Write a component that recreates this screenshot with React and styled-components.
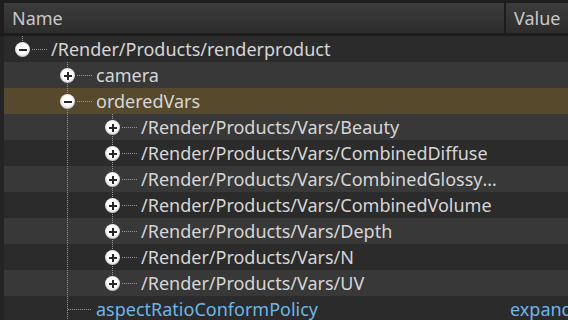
import React from "react";
import styled, { createGlobalStyle, css } from "styled-components";

const Global = createGlobalStyle`
  html, body { margin: 0; padding: 0; background: #1e1e1e; }
  body { width: 568px; height: 320px; overflow: hidden; font-family: "Noto Sans", "Open Sans", sans-serif; }
`;

const Frame = styled.div`
  width: 568px;
  height: 320px;
  overflow: hidden;
  background: #1e1e1e;
  padding-top: 3px;
  box-sizing: border-box;
`;

const Header = styled.div`
  display: flex;
  height: 30px;
  border-bottom: 3px solid #1c1c1c;
  padding-left: 4px;
  background: #1e1e1e;
`;

const HeadCell = styled.div`
  box-sizing: border-box;
  height: 30px;
  line-height: 30px;
  font-size: 18px;
  color: #c9c9c9;
  background: linear-gradient(#3c3c3c, #2c2c2c);
  padding-left: ${(p) => p.$pad}px;
  ${(p) => (p.$w ? css`width: ${p.$w}px; flex: none;` : css`flex: 1;`)}
  ${(p) => p.$sep && css`border-right: 2px solid #1c1c1c;`}
`;

const Body = styled.div`
  display: flex;
  flex-direction: column;
`;

const Row = styled.div`
  display: flex;
  height: 26px;
  border-left: 4px solid #242424;
  background: ${(p) => (p.$hl ? "#574a2c" : p.$alt ? "#383838" : "#2b2b2b")};
`;

const NameCell = styled.div`
  display: flex;
  align-items: stretch;
  width: 504px;
  flex: none;
  min-width: 0;
  padding-right: 8px;
  box-sizing: border-box;
`;

const dotsV = "repeating-linear-gradient(to bottom, #9a9a9a 0 1px, transparent 1px 2px)";
const dotsH = "repeating-linear-gradient(to right, #9a9a9a 0 1px, transparent 1px 2px)";

const Guide = styled.div`
  position: relative;
  width: 45px;
  flex: none;
  &::before {
    content: "";
    display: ${(p) => (p.$line ? "block" : "none")};
    position: absolute;
    left: 18px;
    top: 0;
    bottom: 0;
    width: 1px;
    background: ${dotsV};
  }
`;

const Branch = styled.div`
  position: relative;
  width: 45px;
  flex: none;
  &::before {
    content: "";
    position: absolute;
    left: 18px;
    top: 0;
    height: ${(p) => (p.$more ? "26px" : "13px")};
    width: 1px;
    background: ${dotsV};
  }
  &::after {
    content: "";
    position: absolute;
    top: 13px;
    left: ${(p) => (p.$leaf ? 19 : 28)}px;
    width: ${(p) => (p.$leaf ? 24 : 15)}px;
    height: 1px;
    background: ${dotsH};
  }
`;

const Toggle = styled.div`
  position: absolute;
  left: 11px;
  top: 6px;
  width: 15px;
  height: 15px;
  border-radius: 50%;
  background: radial-gradient(circle at 50% 45%, #ffffff 0 45%, #e6e6e6 60%, #a8a8a8 80%, #6a6a6a 100%);
  z-index: 1;
  &::before, &::after {
    content: "";
    position: absolute;
    background: #262626;
  }
  &::before {
    left: 3.5px;
    top: 6.5px;
    width: 8px;
    height: 2px;
  }
  &::after {
    display: ${(p) => (p.$open ? "none" : "block")};
    left: 6.5px;
    top: 3.5px;
    width: 2px;
    height: 8px;
  }
`;

const Label = styled.div`
  flex: 1;
  min-width: 0;
  padding-left: 2px;
  font-size: 18px;
  line-height: 26px;
  color: ${(p) => (p.$attr ? "#6db6e8" : "#d6d6d6")};
  white-space: nowrap;
  overflow: hidden;
  text-overflow: ellipsis;
`;

const ValueCell = styled.div`
  flex: 1;
  min-width: 0;
  padding-left: 2px;
  font-size: 18px;
  line-height: 26px;
  color: #6db6e8;
  white-space: nowrap;
  overflow: hidden;
`;

const rows = [
  { name: "/Render/Products/renderproduct", level: 0, open: true, more: false, anc: [] },
  { name: "camera", level: 1, open: false, more: true, anc: [false] },
  { name: "orderedVars", level: 1, open: true, more: true, anc: [false], hl: true },
  { name: "/Render/Products/Vars/Beauty", level: 2, open: false, more: true, anc: [false, true] },
  { name: "/Render/Products/Vars/CombinedDiffuse", level: 2, open: false, more: true, anc: [false, true] },
  { name: "/Render/Products/Vars/CombinedGlossyReflection", level: 2, open: false, more: true, anc: [false, true] },
  { name: "/Render/Products/Vars/CombinedVolume", level: 2, open: false, more: true, anc: [false, true] },
  { name: "/Render/Products/Vars/Depth", level: 2, open: false, more: true, anc: [false, true] },
  { name: "/Render/Products/Vars/N", level: 2, open: false, more: true, anc: [false, true] },
  { name: "/Render/Products/Vars/UV", level: 2, open: false, more: false, anc: [false, true] },
  { name: "aspectRatioConformPolicy", level: 1, leaf: true, more: true, anc: [false], attr: true, value: "expandAperture" },
];

export default function App() {
  return (
    <Frame>
      <Global />
      <Header>
        <HeadCell $w={502} $pad={8} $sep>Name</HeadCell>
        <HeadCell $pad={8}>Value</HeadCell>
      </Header>
      <Body>
        {rows.map((r, i) => (
          <Row key={i} $alt={i % 2 === 1} $hl={r.hl}>
            <NameCell>
              {r.anc.map((a, k) => (
                <Guide key={k} $line={a} />
              ))}
              <Branch $more={r.more} $leaf={r.leaf}>
                {!r.leaf && <Toggle $open={r.open} />}
              </Branch>
              <Label $attr={r.attr}>{r.name}</Label>
            </NameCell>
            <ValueCell>{r.value || ""}</ValueCell>
          </Row>
        ))}
      </Body>
    </Frame>
  );
}
